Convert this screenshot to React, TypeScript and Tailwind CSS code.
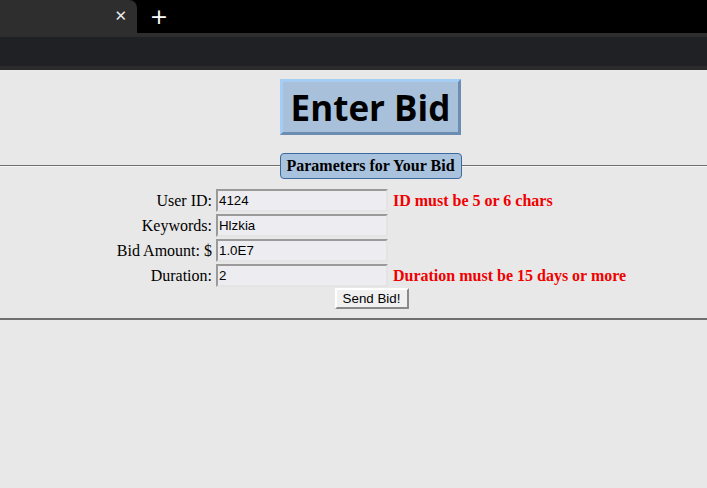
const rows = [
  { label: "User ID:", value: "4124", error: "ID must be 5 or 6 chars" },
  { label: "Keywords:", value: "Hlzkia", error: "" },
  { label: "Bid Amount: $", value: "1.0E7", error: "" },
  { label: "Duration:", value: "2", error: "Duration must be 15 days or more" },
];

function BrowserChrome() {
  return (
    <div className="bg-black">
      {/* tab strip */}
      <div className="flex h-[33px] items-stretch">
        <div className="relative flex w-[137px] items-center justify-end rounded-tr-[8px] bg-[#2e2e2e] pr-[10px]">
          <span className="text-[15px] leading-none text-[#e8e8e8] [font-family:'DejaVu_Sans',sans-serif]">✕</span>
        </div>
        <div className="flex w-[44px] items-center justify-center">
          <span className="text-[22px] leading-none text-white [font-family:'DejaVu_Sans',sans-serif]">+</span>
        </div>
      </div>
      {/* toolbar */}
      <div className="h-[4px] bg-[#2e2e2e]" />
      <div className="h-[29px] bg-[#202124]" />
      <div className="h-[4px] bg-[#2b2b2c]" />
    </div>
  );
}

export default function App() {
  return (
    <div className="min-h-screen w-full overflow-hidden bg-[#e8e8e8]">
      <BrowserChrome />

      <div className="w-[741px] pt-[9px]">
        {/* Heading */}
        <div className="flex justify-center">
          <h1 className="flex h-[56px] w-[181px] items-center justify-center border-[3px] border-t-[#a3cdf4] border-l-[#a3cdf4] border-b-[#6a8db1] border-r-[#6a8db1] bg-[#a8c0d9] text-[35px] font-bold leading-none text-black [font-family:'Open_Sans',sans-serif]">
            Enter Bid
          </h1>
        </div>

        {/* Fieldset */}
        <div className="mt-[18px] border-b-2 border-b-[#6e6e6e] pb-[9px]">
          <div className="flex items-center">
            <div className="h-[2px] flex-1 border-t border-t-[#6e6e6e] border-b border-b-[#f6f6f6]" />
            <div className="flex h-[26px] w-[182px] items-center justify-center rounded-[4px] border border-[#3b6aa0] bg-[#a9c3df] text-[16px] font-bold text-black [font-family:'Liberation_Serif',serif]">
              Parameters for Your Bid
            </div>
            <div className="h-[2px] flex-1 border-t border-t-[#6e6e6e] border-b border-b-[#f6f6f6]" />
          </div>

          <div className="mx-auto mt-[10px] grid w-fit grid-cols-[auto_172px_auto] gap-x-[4px] gap-y-[2px] pl-[2px] [font-family:'Liberation_Serif',serif]">
            {rows.map((r) => (
              <div key={r.label} className="contents">
                <div className="flex h-[23px] items-center justify-end text-[16px] text-black">{r.label}</div>
                <div className="flex h-[23px] items-center border-2 border-t-[#9a9a9a] border-l-[#9a9a9a] border-b-[#e4e4e4] border-r-[#e4e4e4] bg-[#ededf1] px-[1px] text-[13.33px] text-black [font-family:'Liberation_Sans',sans-serif]">
                  {r.value}
                </div>
                <div className="flex h-[23px] items-center pl-[1px] text-[16px] font-bold text-[#f00000]">{r.error}</div>
              </div>
            ))}
            <div className="col-span-3 mt-[-1px] flex justify-center">
              <button className="h-[21px] w-[74px] border-2 border-t-[#ffffff] border-l-[#ffffff] border-b-[#8a8a8a] border-r-[#8a8a8a] bg-[#f0f0f0] text-[13.33px] leading-none text-black [font-family:'Liberation_Sans',sans-serif]">
                Send Bid!
              </button>
            </div>
          </div>
        </div>
      </div>
    </div>
  );
}
